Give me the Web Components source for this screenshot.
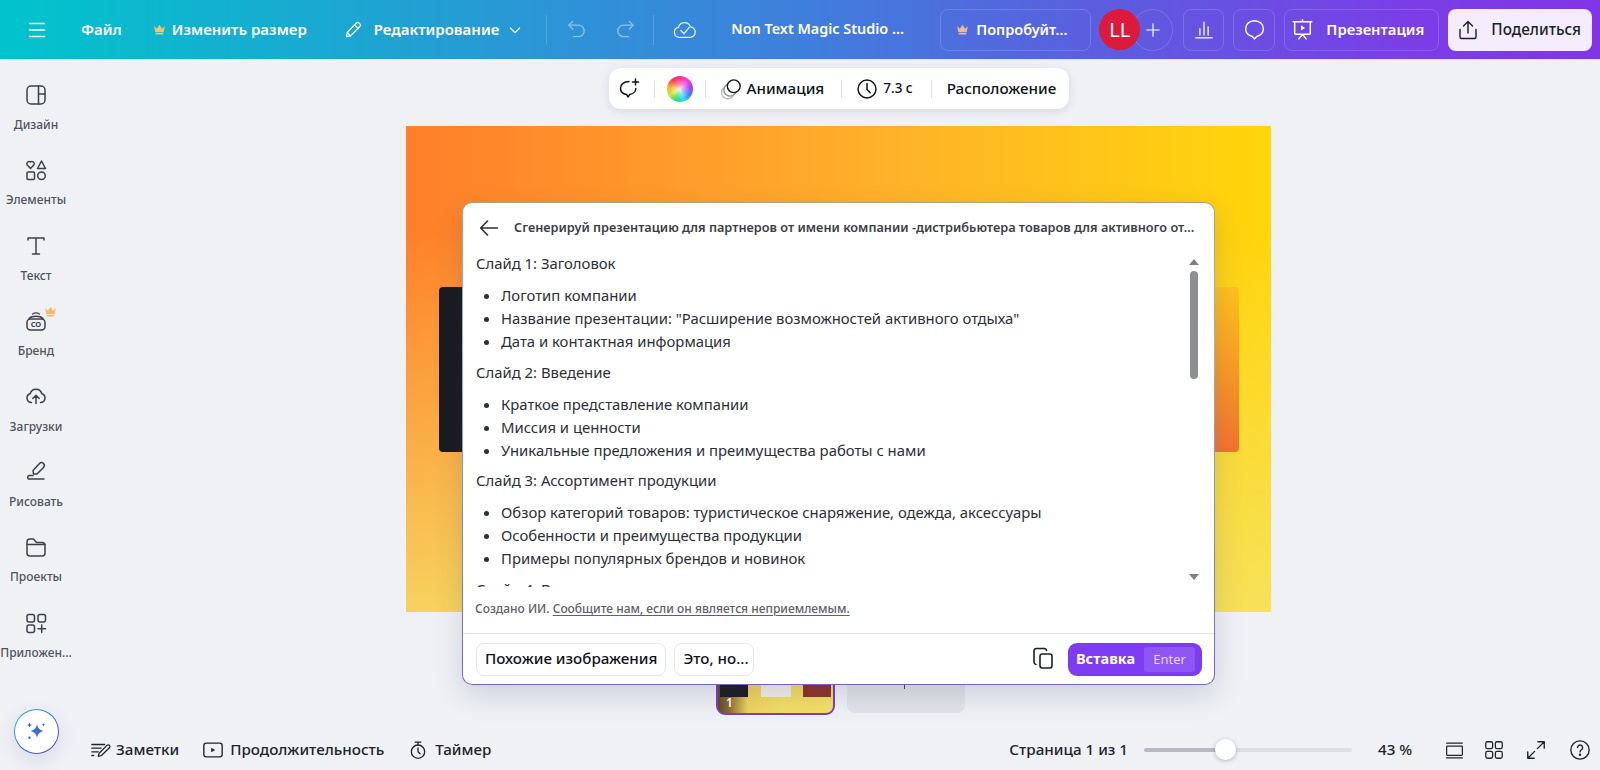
<!DOCTYPE html>
<html lang="ru"><head><meta charset="utf-8"><title>Canva</title>
<style>
html,body{margin:0;height:100%;overflow:hidden}
body{font-family:"Noto Sans","Open Sans",sans-serif;background:#f0f1f5;color:#0e1318}
svg{display:block}
</style></head><body>
<script>
const define=(name,html)=>customElements.define(name,class extends HTMLElement{
  constructor(){super();this.attachShadow({mode:'open'}).innerHTML=html;}
});
const ic=(w,body,sw=1.5)=>`<svg width="${w}" height="${w}" viewBox="0 0 24 24" fill="none" stroke="currentColor" stroke-width="${sw}" stroke-linecap="round" stroke-linejoin="round">${body}</svg>`;
const crown=(w,c)=>`<svg width="${w}" height="${w}" viewBox="0 0 12 12" fill="${c}"><path d="M1 3l2.600 2.400L6 1.500l2.400 3.900L11 3 9.800 8.600H2.200z"/><rect x="2.400" y="9.300" width="7.200" height="1.400" rx=".5"/></svg>`;
window.ICON={
 menu:ic(24,'<path d="M4.500 5.500h15M4.500 12h15M4.500 18.500h15"/>'),
 pencil:ic(20,'<path d="M4 20l1.200-5L16 3.600c.9-.9 2.300-.9 3.200 0l1 1c.9.9.9 2.300 0 3.200L9 19z"/><path d="M14 6l4.500 4.500M5.200 15L9 19"/>',1.4),
 chevron:ic(16,'<path d="M5 9l7 7 7-7"/>',1.6),
 undo:ic(23,'<path d="M8 3.500L4 7.500l4 4"/><path d="M4.500 7.500H14a6 6 0 0 1 0 12H9"/>',1.4),
 redo:ic(23,'<path d="M16 3.500l4 4-4 4"/><path d="M19.500 7.500H10a6 6 0 0 0 0 12h5"/>',1.4),
 cloud:ic(25,'<path d="M7 19.500a4.800 4.800 0 0 1-.8-9.500 6 6 0 0 1 11.500-.5 5 5 0 0 1-.7 10z"/><path d="M8.500 13l3 3 5-6"/>',1.3),
 bars:ic(22,'<path d="M3 20.500h18M7.500 17.500v-7M12 17.500V3.500M16.500 17.500v-9"/>',1.4),
 bubble:ic(25,'<path d="M12 3.500c-5 0-8.500 3.500-8.500 7.800 0 3.800 2.700 6.700 6.400 7.400L12 21l2.100-2.300c3.700-.7 6.400-3.600 6.400-7.400 0-4.300-3.500-7.800-8.500-7.800z"/>',1.4),
 screen:ic(25,'<path d="M3 4.500h18M4.500 4.500v11a1 1 0 0 0 1 1h13a1 1 0 0 0 1-1v-11M12 4.500V2.500M8.500 21l3.500-4.500 3.500 4.500"/><path d="M10.500 8l4 2.500-4 2.500z" fill="currentColor" stroke="none"/>',1.4),
 share:ic(24,'<path d="M12 15V3.500M7.500 8L12 3.500 16.500 8"/><path d="M4 11.500V19a1.500 1.500 0 0 0 1.500 1.500h13A1.500 1.500 0 0 0 20 19v-7.500"/>',1.4),
 plus:ic(20,'<path d="M12 4.500v15M4.500 12h15"/>',1.4),
 back:ic(24,'<path d="M20.500 12H4M10.500 5L3.700 12l6.800 7"/>',1.6),
 copy:ic(24,'<rect x="9" y="8" width="12" height="14" rx="2.200"/><path d="M15.500 4.500A2.300 2.300 0 0 0 13.500 2.500H5.300A2.300 2.300 0 0 0 3 4.800v11.500A2.300 2.300 0 0 0 5 18.500"/>',1.6),
};
define('header-item',`<style>:host{display:inline-flex;align-items:center;gap:6px;height:42px;font:600 15px/1 "Noto Sans",sans-serif;color:#fff;white-space:nowrap;box-sizing:border-box}
:host([boxed]){border:1px solid rgba(255,255,255,.16);border-radius:8px;justify-content:center}
:host([solid]){background:#f4ecfd;color:#1a1f26;border-radius:8px;justify-content:center;gap:9px;font-weight:500}
:host([dim]){opacity:.45}</style><slot></slot>`);
define('header-rule',`<style>:host{display:block;width:1px;height:30px;background:rgba(255,255,255,.16)}</style>`);
define('app-header',`<style>:host{display:flex;align-items:center;height:60px;box-sizing:border-box;background:linear-gradient(90deg,#00c4cc 0%,#1fa3d2 24%,#3f7fdc 50%,#5a5fdf 68%,#7a3ee6 88%,#8135e8 100%);border-bottom:1px solid #cdeef3}
</style><slot></slot>`);
define('side-item',`<style>:host{display:flex;flex-direction:column;align-items:center;width:72px;height:75.4px;color:#3c4049;position:relative}
.i{height:24px;display:flex;align-items:center;justify-content:center;margin-top:12px}
.l{font:500 12px/14px "Noto Sans",sans-serif;color:#4f545c;margin-top:11px;white-space:nowrap}
::slotted([slot=badge]){position:absolute;left:44px;top:8px}</style>
<div class="i"><slot></slot></div><div class="l"><slot name="label"></slot></div><slot name="badge"></slot>`);
define('magic-button',`<style>:host{display:flex;width:45px;height:45px;box-sizing:border-box;border-radius:50%;background:linear-gradient(#fff,#fff) padding-box,linear-gradient(135deg,#22c8d4,#3b6bd6 50%,#6b35c8) border-box;border:1.500px solid transparent;align-items:center;justify-content:center;box-shadow:0 6px 18px rgba(60,70,130,.13)}</style><slot></slot>`);
define('side-bar',`<style>:host{display:flex;flex-direction:column;width:72px;box-sizing:border-box;padding-top:11px;height:710px}
.sp{flex:1}.m{display:flex;justify-content:center;padding-bottom:16.500px}</style>
<slot></slot><div class="sp"></div><div class="m"><slot name="magic"></slot></div>`);
define('tool-rule',`<style>:host{display:block;width:1px;height:18px;background:#dfe1e6}</style>`);
define('tool-item',`<style>:host{display:inline-flex;align-items:center;gap:5px;font:500 15.2px/1 "Noto Sans",sans-serif;color:#0e1318;white-space:nowrap}</style><slot></slot>`);
define('float-toolbar',`<style>:host{display:flex;align-items:center;box-sizing:border-box;width:460px;height:41px;padding:0 0 0 8px;background:#fff;border-radius:12px;box-shadow:0 2px 10px rgba(50,60,90,.14)}</style><slot></slot>`);
define('design-canvas',`<style>:host{display:block;width:865px;height:486px;box-sizing:border-box;padding-top:161px;padding-left:33px;background:linear-gradient(180deg,rgba(246,226,110,0) 22%,rgba(245,228,105,.82) 100%),linear-gradient(90deg,#ff7f2a 0%,#ffb12a 55%,#ffd60a 100%)}
.band{display:flex;justify-content:space-between;width:800px;height:165px;border-radius:4px;overflow:hidden}
.a{width:60px;background:#1a1b1f}.b{width:60px;background:linear-gradient(180deg,#fdc21c,#f4722f)}</style>
<div class="band"><div class="a"></div><div class="b"></div></div>`);
define('page-thumb',`<style>:host{display:block;width:119px;height:67px;box-sizing:border-box;border:2px solid #7d3fb8;border-radius:9px;overflow:hidden;position:relative;background:linear-gradient(90deg,#5f4a26 0%,#8d6f32 10%,#efd35c 26%,#f3de63 55%,#f3e065 100%)}
.top{display:flex;justify-content:space-between;padding:0 2px;height:47px}
.top i{display:block;width:28px;height:100%}
.n{position:absolute;left:8px;bottom:3px;font:600 12px/14px "Noto Sans",sans-serif;color:#fff}</style>
<div class="top"><i style="background:#1b1c22;"></i><i style="background:#f4efe6;width:30px"></i><i style="background:#8e3326"></i></div><span class="n"><slot></slot></span>`);
define('page-thumb-empty',`<style>:host{display:block;width:118px;height:65px;background:#e2e3e8;border-radius:8px;position:relative}
i{position:absolute;left:57px;top:36px;width:1px;height:5px;background:#444}</style><i></i>`);
define('outline-chip',`<style>:host{display:inline-flex;align-items:center;height:33px;box-sizing:border-box;padding:0 8px;border:1px solid #e6e7ea;border-radius:8px;font:500 15.200px/1 "Noto Sans",sans-serif;color:#0e1318;white-space:nowrap;background:#fff}</style><slot></slot>`);
define('insert-button',`<style>:host{display:inline-flex;align-items:center;justify-content:space-between;width:134px;height:33px;box-sizing:border-box;padding:0 7px 0 8px;background:#7d3bf2;border-radius:9px;color:#fff}
b{font:700 14.500px/1 "Noto Sans",sans-serif;position:relative;top:-1px}
span{display:flex;align-items:center;justify-content:center;width:51px;height:25px;background:#8f55f5;border-radius:3px;font:400 13px/1 "Noto Sans",sans-serif;color:#e6d8fd}</style><b><slot></slot></b><span>Enter</span>`);
define('ai-scroll',`<style>:host{display:block;position:relative;height:335px;margin:0 0 0 1px}
.clip{height:335px;overflow:hidden;padding:0 40px 0 12px;box-sizing:border-box}
.up,.dn{position:absolute;left:725px;width:0;height:0;border-left:5px solid transparent;border-right:5px solid transparent}
.up{top:7px;border-bottom:6px solid #7d8087}.dn{top:322px;border-top:6px solid #7d8087}
.th{position:absolute;left:726px;top:19px;width:8px;height:108px;border-radius:4px;background:#8e8f91}
</style><div class="clip"><slot></slot></div><div class="up"></div><div class="th"></div><div class="dn"></div>`);
define('slide-plan',`<style>:host{display:block;font:400 14.850px/23px "Noto Sans",sans-serif;color:#2b2f36}
h4{font:inherit;margin:0 0 9px}ul{margin:0 0 7.500px;padding:0 0 0 25px}</style>
<h4><slot name="title"></slot></h4><ul><slot></slot></ul>`);
define('plan-line',`<style>:host{display:list-item;list-style:disc}</style><slot></slot>`);
define('ai-dialog',`<style>:host{position:absolute;left:390px;top:142px;width:753px;height:483px;box-sizing:border-box;display:flex;flex-direction:column;border-radius:10px;border:1px solid transparent;background:linear-gradient(#fff,#fff) padding-box,linear-gradient(180deg,#aaa57e 0%,#93b8d2 30%,#7f8acb 70%,#7a62c8 100%) border-box;box-shadow:0 10px 28px rgba(50,60,110,.18)}
.head{display:flex;align-items:center;height:49px;flex:none;padding:0 18px 0 14px;gap:13px;color:#2c3038}
.t{font:600 12.730px/1 "Noto Sans",sans-serif;white-space:nowrap;color:#3a3e46;flex:1;min-width:0}
.note{font:500 12px/14px "Noto Sans",sans-serif;color:#5d6168;padding:15px 0 0 12px;height:46px;box-sizing:border-box;flex:none}
.note u{text-underline-offset:2px}
.foot{flex:1;border-top:1px solid #e4e5e9;display:flex;align-items:center;padding:0 12px 0 13px;gap:8px}
.sp{flex:1}.cp{color:#1b1f26;margin-right:5px;position:relative;top:1px}</style>
<div class="head">${ICON.back}<div class="t">Сгенерируй презентацию для партнеров от имени компании -дистрибьютера товаров для активного от...</div></div>
<slot></slot>
<div class="note">Создано ИИ. <u>Сообщите нам, если он является неприемлемым.</u></div>
<div class="foot"><slot name="chips"></slot><div class="sp"></div><div class="cp">${ICON.copy}</div><slot name="go"></slot></div>`);
define('design-stage',`<style>:host{display:flex;flex-direction:column;align-items:center;flex:1;position:relative;padding:8px 0 0 5px;box-sizing:border-box;min-height:0}
.c{margin-top:17px}.th{display:flex;gap:12px;margin-top:36px;margin-left:4px;align-items:flex-start}</style>
<slot name="toolbar"></slot><div class="c"><slot name="canvas"></slot></div><div class="th"><slot name="thumbs"></slot></div><slot></slot>`);
define('foot-item',`<style>:host{display:inline-flex;align-items:center;gap:4px;font:500 15.200px/1 "Noto Sans",sans-serif;color:#20242b;white-space:nowrap}</style><slot></slot>`);
define('zoom-slider',`<style>:host{display:block;position:relative;width:208px;height:4px;border-radius:2px;background:linear-gradient(90deg,#b5bac3 38.500%,#dcdee4 38.500%)}
i{position:absolute;left:71px;top:-9px;width:21px;height:21px;border-radius:50%;background:#fff;box-shadow:0 1px 4px rgba(30,40,60,.3)}</style><i></i>`);
define('bottom-bar',`<style>:host{display:flex;align-items:center;height:40px;padding-left:18px;flex:none}</style><slot></slot>`);
define('app-shell',`<style>:host{display:flex;flex-direction:column;width:1600px;height:770px;overflow:hidden;background:#f0f1f5}
.m{display:flex;flex:1;min-height:0}.r{display:flex;flex-direction:column;flex:1;min-width:0}</style>
<slot name="top"></slot><div class="m"><slot name="side"></slot><div class="r"><slot></slot><slot name="bottom"></slot></div></div>`);
const S=(n,w=24,sw=1.5)=>ic(w,n,sw);
const wheel=`<span style="display:block;width:26px;height:26px;border-radius:50%;background:radial-gradient(circle,rgba(255,255,255,.85) 0,rgba(255,255,255,.4) 28%,rgba(255,255,255,0) 58%),conic-gradient(#ff2fa0,#ff3ad0,#a03dff,#3d7dff,#2fd6ff,#2fe07a,#c7ea2f,#ffb02f,#ff3d3d,#ff2fa0)"></span>`;
document.body.innerHTML=`
<app-shell>
 <app-header slot="top">
  <header-item style="margin-left:25px;width:24px">${ICON.menu}</header-item>
  <header-item style="margin-left:32px">Файл</header-item>
  <header-item style="margin-left:31px">${crown(13,'#f2c66d')}Изменить размер</header-item>
  <header-item style="margin-left:36px;gap:11px">${ICON.pencil}Редактирование</header-item>
  <header-item style="margin-left:8px">${ICON.chevron}</header-item>
  <header-rule style="margin-left:23px"></header-rule>
  <header-item dim style="margin-left:18px">${ICON.undo}</header-item>
  <header-item dim style="margin-left:26px">${ICON.redo}</header-item>
  <header-rule style="margin-left:16px"></header-rule>
  <header-item style="margin-left:18px;opacity:.85">${ICON.cloud}</header-item>
  <header-item style="margin-left:34px;width:173px;font-size:14.400px">Non Text Magic Studio ...</header-item>
  <header-item boxed style="margin-left:36px;width:151px;gap:7px;font-size:14.500px;justify-content:flex-start;padding-left:15px">${crown(13,'#f2b98a')}Попробуйт...</header-item>
  <span style="display:inline-flex;margin-left:8px;align-items:center;position:relative">
   <span style="display:flex;width:41px;height:41px;border-radius:50%;background:#dc1a3c;color:#fff;align-items:center;justify-content:center;font:400 20px/1 'Noto Sans',sans-serif;position:relative;z-index:1">LL</span>
   <header-item boxed style="width:41px;margin-left:-8px;border-radius:50%;justify-content:center">${ICON.plus}</header-item>
  </span>
  <header-item boxed style="margin-left:10px;width:41px">${ICON.bars}</header-item>
  <header-item boxed style="margin-left:9px;width:42px">${ICON.bubble}</header-item>
  <header-item boxed style="margin-left:9px;width:155px;gap:11px;font-size:14.800px;justify-content:flex-start;padding-left:5px">${ICON.screen}Презентация</header-item>
  <header-item solid style="margin-left:9px;width:144px;gap:11px;font-size:15.300px;justify-content:flex-start;padding-left:8px">${ICON.share}Поделиться</header-item>
 </app-header>
 <side-bar slot="side">
  <side-item>${S('<rect x="3" y="3" width="18" height="18" rx="4"/><path d="M14.500 3v18M14.500 11H21"/>')}<span slot="label">Дизайн</span></side-item>
  <side-item>${S('<path d="M6.500 10.500L3 6.800A2.300 2.300 0 0 1 6.500 4 2.300 2.300 0 0 1 10 6.800z"/><path d="M17.500 3l4 7.500h-8z"/><rect x="3" y="14" width="7.500" height="7.500" rx="1"/><circle cx="17.500" cy="17.700" r="3.800"/>')}<span slot="label">Элементы</span></side-item>
  <side-item>${S('<path d="M4 6V4h16v2M12 4v16M8.500 20h7"/>')}<span slot="label">Текст</span></side-item>
  <side-item>${ic(24,'<rect x="3" y="10" width="18" height="11" rx="3.500"/><path d="M5 9.500C8 6.500 16 6.500 19 9.500M8.500 5c2-1.200 5-1.200 7 0" stroke-width="1.300"/><text x="12" y="18.300" font-family="Noto Sans" font-size="7.500" font-weight="700" text-anchor="middle" fill="currentColor" stroke="none">CO</text>')}<span slot="label">Бренд</span><span slot="badge">${crown(13,'#f4b969')}</span></side-item>
  <side-item>${S('<g transform="translate(0 -1.500)"><path d="M7.500 19A4.500 4.500 0 0 1 6.200 10.200 6 6 0 0 1 17.800 10.200 4.500 4.500 0 0 1 16.500 19"/><path d="M12 20v-8M8.800 15L12 11.800 15.200 15"/></g>')}<span slot="label">Загрузки</span></side-item>
  <side-item>${S('<g transform="translate(0 -1)"><path d="M9.500 15L9 11.500 15.500 4.500c1-1.200 3-1.200 4 0s1 3 0 4L13 15z"/><path d="M9 16.500H5.500a1.800 1.800 0 0 0 0 3.600H20"/></g>')}<span slot="label">Рисовать</span></side-item>
  <side-item>${S('<path d="M3 7a3 3 0 0 1 3-3h3.500l3 3.500H18a3 3 0 0 1 3 3V18a3 3 0 0 1-3 3H6a3 3 0 0 1-3-3z"/><path d="M3 9.500h18"/>')}<span slot="label">Проекты</span></side-item>
  <side-item>${S('<rect x="3" y="3.500" width="7.500" height="7.500" rx="2"/><rect x="14" y="3.500" width="7.500" height="7.500" rx="2"/><rect x="3" y="14" width="7.500" height="7.500" rx="2"/><path d="M17.700 14v7.500M14 17.700h7.500"/>')}<span slot="label">Приложен...</span></side-item>
  <magic-button slot="magic"><svg width="24" height="24" viewBox="0 0 24 24"><path d="M13 5c.8 4 2.300 5.700 6.500 7-4.200 1.300-5.700 3-6.500 7-.8-4-2.300-5.700-6.500-7 4.200-1.300 5.700-3 6.500-7z" fill="#3f6fd8"/><path d="M5.500 3.500l.7 1.800 1.800.7-1.800.7-.7 1.800-.7-1.800L3 6l1.800-.7zM19.500 4l.5 1.200 1.200.5-1.200.5-.5 1.200-.5-1.200-1.200-.5 1.200-.5zM5.500 17.500a1.200 1.200 0 1 1 0 2.400 1.200 1.200 0 0 1 0-2.400z" fill="#2a6fa8"/></svg></magic-button>
 </side-bar>
 <design-stage>
  <float-toolbar slot="toolbar">
   <tool-item>${ic(24,'<path d="M12 4.500c-5 0-8.500 2.700-8.500 6.700 0 3.300 2.500 5.700 6 6.200l1.500 2.600 1.800-2.600c3.400-.5 6-3 6-6"/><path d="M18.500 2v6M15.500 5h6"/>',1.5)}</tool-item>
   <tool-rule style="margin-left:13px"></tool-rule>
   <tool-item style="margin-left:12px">${wheel}</tool-item>
   <tool-rule style="margin-left:12px"></tool-rule>
   <tool-item style="margin-left:14px"><svg width="22" height="22" viewBox="0 0 24 24" fill="none" stroke-width="1.500"><circle cx="8.500" cy="16" r="6.800" stroke="#b9bbbf"/><circle cx="11" cy="13" r="6.800" stroke="#8d9096" fill="#fff"/><circle cx="15" cy="9" r="7" stroke="#101318" fill="#fff"/></svg>Анимация</tool-item>
   <tool-rule style="margin-left:17px"></tool-rule>
   <tool-item style="margin-left:14px;font-size:13.500px">${ic(22,'<circle cx="12" cy="12" r="9.800"/><path d="M12 6v6.500l3.500 3.500"/>',1.6)}7.3 с</tool-item>
   <tool-rule style="margin-left:18px"></tool-rule>
   <tool-item style="margin-left:15px">Расположение</tool-item>
  </float-toolbar>
  <design-canvas slot="canvas"></design-canvas>
  <page-thumb slot="thumbs">1</page-thumb>
  <page-thumb-empty slot="thumbs"></page-thumb-empty>
  <ai-dialog>
   <ai-scroll>
    <slide-plan><span slot="title">Слайд 1: Заголовок</span><plan-line>Логотип компании</plan-line><plan-line>Название презентации: "Расширение возможностей активного отдыха"</plan-line><plan-line>Дата и контактная информация</plan-line></slide-plan>
    <slide-plan><span slot="title">Слайд 2: Введение</span><plan-line>Краткое представление компании</plan-line><plan-line>Миссия и ценности</plan-line><plan-line>Уникальные предложения и преимущества работы с нами</plan-line></slide-plan>
    <slide-plan><span slot="title">Слайд 3: Ассортимент продукции</span><plan-line>Обзор категорий товаров: туристическое снаряжение, одежда, аксессуары</plan-line><plan-line>Особенности и преимущества продукции</plan-line><plan-line>Примеры популярных брендов и новинок</plan-line></slide-plan>
    <slide-plan><span slot="title">Слайд 4: Выгоды</span></slide-plan>
   </ai-scroll>
   <outline-chip slot="chips">Похожие изображения</outline-chip>
   <outline-chip slot="chips" style="width:80px">Это, но...</outline-chip>
   <insert-button slot="go">Вставка</insert-button>
  </ai-dialog>
 </design-stage>
 <bottom-bar slot="bottom">
  <foot-item>${ic(22,'<path d="M2 6h14M2 10h10M2 14h7M2 18h2"/><path d="M9 19l1-3.500 8.500-8.500c.8-.8 2-.8 2.700 0 .7.700.7 1.900 0 2.600L12.500 18z"/>',1.4)}Заметки</foot-item>
  <foot-item style="margin-left:23px;gap:6px">${ic(22,'<rect x="2" y="4.500" width="20" height="15" rx="2.500"/><path d="M10 9.500l4.500 2.500-4.500 2.500z" fill="currentColor" stroke="none"/>',1.5)}Продолжительность</foot-item>
  <foot-item style="margin-left:24px;gap:7px">${ic(20,'<circle cx="12" cy="14" r="8"/><path d="M8.500 2.500h7M12 2.500v3.500M12 9.500V14l2.500 2.500"/>',1.6)}Таймер</foot-item>
  <foot-item style="margin-left:auto">Страница 1 из 1</foot-item>
  <zoom-slider style="margin-left:16px"></zoom-slider>
  <foot-item style="margin-left:26px;width:42px">43 %</foot-item>
  <foot-item style="margin-left:24px">${ic(21,'<path d="M3 3.500h18M3 20.500h18"/><rect x="3" y="7" width="18" height="10.500" rx="1"/>',1.4)}</foot-item>
  <foot-item style="margin-left:18px">${ic(22,'<rect x="3" y="3" width="7.500" height="7.500" rx="1.800"/><rect x="13.500" y="3" width="7.500" height="7.500" rx="1.800"/><rect x="3" y="13.500" width="7.500" height="7.500" rx="1.800"/><rect x="13.500" y="13.500" width="7.500" height="7.500" rx="1.800"/>',1.4)}</foot-item>
  <foot-item style="margin-left:20px">${ic(22,'<path d="M14 3h7v7M21 3l-7.500 7.500M10 21H3v-7M3 21l7.500-7.500"/>',1.5)}</foot-item>
  <foot-item style="margin-left:22px;margin-right:9px">${ic(22,'<circle cx="12" cy="12" r="10"/><path d="M9.300 9.300a2.800 2.800 0 1 1 4.300 2.400c-1 .7-1.600 1.300-1.600 2.400"/><circle cx="12" cy="17.200" r=".6" fill="currentColor"/>',1.5)}</foot-item>
 </bottom-bar>
</app-shell>`;
</script>
</body></html>
